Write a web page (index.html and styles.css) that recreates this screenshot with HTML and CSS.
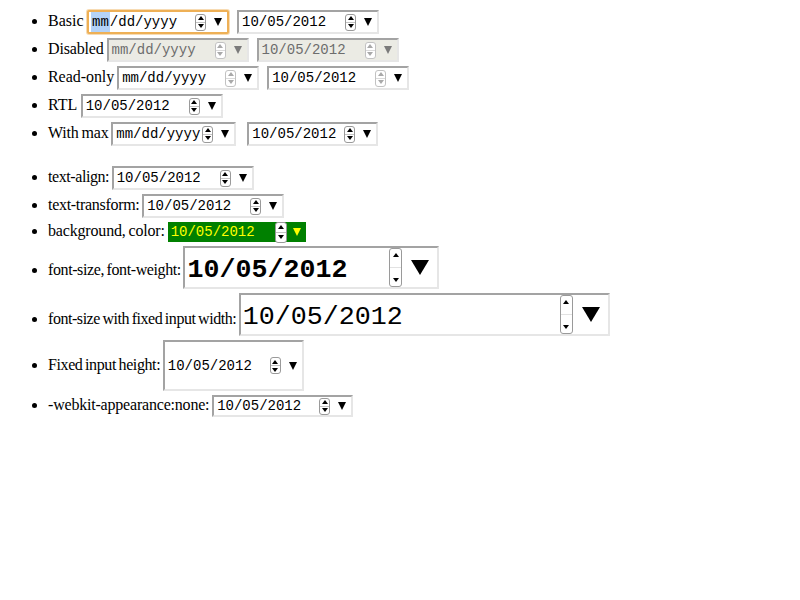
FILE: index.html
```html
<!DOCTYPE html>
<html>
<head>
<meta charset="utf-8">
<link rel="stylesheet" href="styles.css">
</head>
<body>
<ul class="list">
  <li><span class="lbl l-basic">Basic </span><span class="date focus"><span class="txt"><span class="sel">mm</span>/dd/yyyy</span><span class="spin"><i class="up"></i><i class="dn"></i></span><span class="ind"></span></span> <span class="date next"><span class="txt">10/05/2012</span><span class="spin"><i class="up"></i><i class="dn"></i></span><span class="ind"></span></span></li>
  <li><span class="lbl l-dis">Disabled </span><span class="date dis"><span class="txt">mm/dd/yyyy</span><span class="spin"><i class="up"></i><i class="dn"></i></span><span class="ind"></span></span> <span class="date dis next"><span class="txt">10/05/2012</span><span class="spin"><i class="up"></i><i class="dn"></i></span><span class="ind"></span></span></li>
  <li><span class="lbl l-ro">Read-only </span><span class="date ro"><span class="txt">mm/dd/yyyy</span><span class="spin"><i class="up"></i><i class="dn"></i></span><span class="ind"></span></span> <span class="date ro next"><span class="txt">10/05/2012</span><span class="spin"><i class="up"></i><i class="dn"></i></span><span class="ind"></span></span></li>
  <li><span class="lbl l-rtl">RTL </span><span class="date"><span class="txt">10/05/2012</span><span class="spin"><i class="up"></i><i class="dn"></i></span><span class="ind"></span></span></li>
  <li><span class="lbl l-max">With max </span><span class="date max1"><span class="txt">mm/dd/yyyy</span><span class="spin"><i class="up"></i><i class="dn"></i></span><span class="ind"></span></span> <span class="date max2"><span class="txt">10/05/2012</span><span class="spin"><i class="up"></i><i class="dn"></i></span><span class="ind"></span></span></li>
</ul>
<ul class="list list2">
  <li><span class="lbl l-ta">text-align: </span><span class="date"><span class="txt">10/05/2012</span><span class="spin"><i class="up"></i><i class="dn"></i></span><span class="ind"></span></span></li>
  <li><span class="lbl l-tt">text-transform: </span><span class="date"><span class="txt">10/05/2012</span><span class="spin"><i class="up"></i><i class="dn"></i></span><span class="ind"></span></span></li>
  <li><span class="lbl l-bg">background, color: </span><span class="date green"><span class="txt">10/05/2012</span><span class="spin"><i class="up"></i><i class="dn"></i></span><span class="ind"></span></span></li>
  <li><span class="lbl l-fs">font-size, font-weight: </span><span class="date big bold"><span class="txt">10/05/2012</span><span class="spin"><i class="up"></i><i class="dn"></i></span><span class="ind"></span></span></li>
  <li><span class="lbl l-fw">font-size with fixed input width: </span><span class="date big wide"><span class="txt">10/05/2012</span><span class="spin"><i class="up"></i><i class="dn"></i></span><span class="ind"></span></span></li>
  <li><span class="lbl l-fh">Fixed input height: </span><span class="date tall"><span class="txt">10/05/2012</span><span class="spin"><i class="up"></i><i class="dn"></i></span><span class="ind"></span></span></li>
  <li><span class="lbl l-wk">-webkit-appearance:none: </span><span class="date none"><span class="txt">10/05/2012</span><span class="spin"><i class="up"></i><i class="dn"></i></span><span class="ind"></span></span></li>
</ul>
</body>
</html>
```
FILE: styles.css
```css
body {
  margin: 8px;
  font: 16px "Liberation Serif", "Times New Roman", serif;
  color: #000;
  background: #fff;
}
ul {
  margin: 0;
  padding-left: 40px;
}
.list2 {
  margin-top: 16px;
}

/* label text: the reference serif runs a little narrower than Liberation Serif */
.lbl {
  letter-spacing: -0.3px;
  word-spacing: -1px;
}
.l-basic {
  letter-spacing: 0;
  word-spacing: -0.5px;
}
.l-dis {
  letter-spacing: -0.15px;
}
.l-ro {
  letter-spacing: -0.05px;
}
.l-rtl {
  letter-spacing: 0;
  word-spacing: 0;
}
.l-max {
  letter-spacing: -0.18px;
}
.l-ta {
  letter-spacing: -0.42px;
}
.l-bg {
  letter-spacing: -0.17px;
}
.l-fs {
  letter-spacing: -0.4px;
}
.l-fw {
  letter-spacing: -0.45px;
}
.l-fh {
  letter-spacing: -0.4px;
}
.l-wk {
  letter-spacing: -0.2px;
}

.date {
  display: inline-flex;
  align-items: center;
  box-sizing: border-box;
  width: 142px;
  height: 24px;
  margin: 2px 0;
  padding: 0 5px 0 3px;
  border: 2px solid;
  border-color: #a3a3a3 #e6e6e6 #e6e6e6 #a3a3a3;
  background: #fff;
  font: 14px "Liberation Mono", monospace;
  color: #000;
  vertical-align: baseline;
}
.next {
  margin-left: 4px;
}
.txt {
  flex: 1;
  white-space: pre;
}
.sel {
  background: #b4d3f8;
  padding: 2px 1px;
  margin-left: -1px;
}
.focus {
  border-color: #eeb056;
  border-radius: 2px;
  box-shadow: 0 0 0 1px rgba(238, 176, 86, 0.45);
}
.spin {
  display: flex;
  flex-direction: column;
  box-sizing: border-box;
  width: 11px;
  height: 17px;
  margin-right: 8px;
  border: 1px solid #9a9a9a;
  border-radius: 3px;
  background: #fff;
}
.spin i {
  flex: 1;
  display: flex;
  justify-content: center;
  align-items: center;
}
.spin .up {
  border-bottom: 1px solid #c4c4c4;
}
.spin .up::before {
  content: "";
  border-left: 3px solid transparent;
  border-right: 3px solid transparent;
  border-bottom: 4px solid #000;
}
.spin .dn::before {
  content: "";
  border-left: 3px solid transparent;
  border-right: 3px solid transparent;
  border-top: 4px solid #000;
}
.ind {
  width: 0;
  height: 0;
  border-left: 4.5px solid transparent;
  border-right: 4.5px solid transparent;
  border-top: 8px solid #000;
}

/* disabled / read-only */
.dis {
  background: #ebebe4;
  color: #6d6d6d;
}
.dis .spin,
.ro .spin {
  border-color: #c2c2c2;
}
.dis .spin .up,
.ro .spin .up {
  border-bottom-color: #dadada;
}
.dis .spin .up::before,
.ro .spin .up::before {
  border-bottom-color: #a9a9a9;
}
.dis .spin .dn::before,
.ro .spin .dn::before {
  border-top-color: #a9a9a9;
}
.dis .ind {
  border-top-color: #7a7a7a;
}

/* with max */
.max1 {
  width: 125px;
}
.max2 {
  width: 131px;
  margin-left: 7px;
}

/* colors */
.green {
  width: 138px;
  height: 20px;
  border: none;
  background: #008000;
  color: #ffff00;
  padding: 0 5px 0 3px;
}
.green .spin {
  width: 12px;
  height: 21px;
  margin-right: 6px;
}
.green .ind {
  border-top-color: #ffff00;
}

/* big fonts */
.big {
  height: 43px;
  font-size: 26.67px;
  padding: 0 8px 0 2px;
}
.big .txt {
  padding-top: 4px;
}
.bold {
  width: 256px;
  font-weight: bold;
  vertical-align: -2px;
}
.wide {
  width: 371px;
}
.big .spin {
  width: 13px;
  height: 39px;
  margin-right: 9px;
}
.big .spin i {
  padding: 4px 0;
}
.big .spin .up {
  align-items: flex-start;
  border-bottom-color: #e2e2e2;
}
.big .spin .dn {
  align-items: flex-end;
}
.big .ind {
  border-left-width: 9px;
  border-right-width: 9px;
  border-top-width: 15px;
}

.tall {
  width: 141px;
  height: 51px;
}
.none {
  width: 141px;
  height: 22px;
}
```
